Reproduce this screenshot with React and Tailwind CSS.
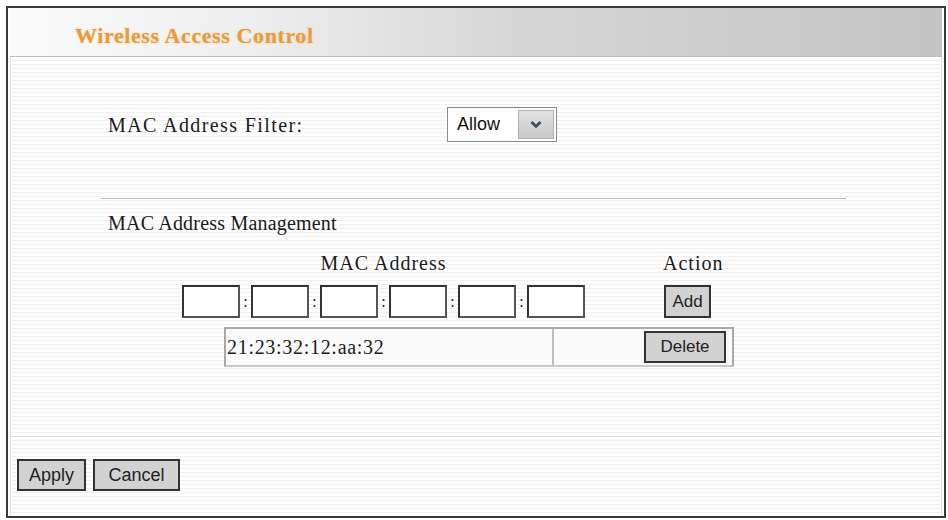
export default function App() {
  const serif = { fontFamily: '"Liberation Serif", "DejaVu Serif", serif' };
  const sans = { fontFamily: '"Liberation Sans", Arial, sans-serif' };
  const boxes = [0, 1, 2, 3, 4, 5];

  return (
    <div className="w-[948px] h-[520px] bg-white pt-[6px] pl-[6px] pr-[2px] pb-[2px]">
      <div className="h-[512px] w-[940px] border-2 border-[#3a3a3a] flex flex-col bg-white">
        {/* Header band */}
        <div className="h-[49px] mx-[2px] flex items-center pl-[65px] pt-[6px] bg-[linear-gradient(to_right,#fbfbfb_0%,#efefef_25%,#d6d6d6_55%,#c4c4c4_100%)] border-b border-[#bdbdbd]">
          <span
            className="text-[22px] font-bold tracking-[0.6px] text-[#e99a3a] [text-shadow:0_0_2px_#f6c78a]"
            style={serif}
          >
            Wireless Access Control
          </span>
        </div>

        {/* Body */}
        <div className="flex-1 mx-[2px] border-x border-[#e2e2e2] flex flex-col bg-[repeating-linear-gradient(to_bottom,#ffffff_0px,#ffffff_3px,#f1f1f1_3px,#f1f1f1_4px)] text-[#1a1a1a]">
          {/* Filter row */}
          <div className="mt-[50px] h-[35px] flex items-center">
            <div className="w-[436px] pl-[97px] text-[20px] tracking-[1.4px]" style={serif}>
              MAC Address Filter:
            </div>
            <div className="w-[110px] h-[35px] border border-[#7f8c99] bg-white flex items-center justify-between pl-[9px] pr-[2px]">
              <span className="text-[18px] text-[#111]" style={sans}>Allow</span>
              <div className="w-[36px] h-[29px] bg-[linear-gradient(to_bottom,#e4e4e4,#c8c8c8)] border border-[#b0b0b0] flex items-center justify-center">
                <svg width="12" height="9" viewBox="0 0 12 9">
                  <path d="M1.5 2 L6 6.5 L10.5 2" fill="none" stroke="#3d4b5c" strokeWidth="2.6" />
                </svg>
              </div>
            </div>
          </div>

          {/* Separator */}
          <div className="mt-[56px] ml-[90px] w-[745px] h-px bg-[#b9b9b9]" />

          <div className="mt-[14px] pl-[97px] h-[20px] leading-[20px] text-[20px] tracking-[0.2px]" style={serif}>
            MAC Address Management
          </div>

          {/* Column headings */}
          <div className="mt-[20px] ml-[171px] h-[20px] flex items-center text-[20px] tracking-[1px]" style={serif}>
            <div className="w-[403px] text-center">MAC Address</div>
            <div className="ml-[78px]">Action</div>
          </div>

          {/* Inputs row */}
          <div className="mt-[12px] ml-[171px] h-[33px] flex items-center">
            {boxes.map((i) => (
              <div key={i} className="flex items-center">
                {i > 0 && (
                  <span className="w-[11px] text-center text-[16px] leading-none" style={serif}>:</span>
                )}
                <div className="w-[58px] h-[33px] bg-white border-2 border-[#333] border-r-[#555] border-b-[#555]" />
              </div>
            ))}
            <button
              className="ml-[79px] w-[47px] h-[33px] bg-[#d2d2d2] border-2 border-[#333] text-[17px] text-[#222]"
              style={sans}
            >
              Add
            </button>
          </div>

          {/* Entry table */}
          <div className="mt-[9px] ml-[213px] w-[510px] h-[40px] border-2 border-[#a8a8a8] border-b-[#c8c8c8] flex bg-[#fafafa]">
            <div className="w-[328px] border-r-2 border-[#bdbdbd] flex items-center pl-[1px] text-[20px] tracking-[0.7px]" style={serif}>
              21:23:32:12:aa:32
            </div>
            <div className="flex-1 flex items-center justify-end pr-[6px]">
              <button
                className="w-[82px] h-[32px] bg-[#d2d2d2] border-2 border-[#333] text-[17px] text-[#222]"
                style={sans}
              >
                Delete
              </button>
            </div>
          </div>

          {/* Bottom separator */}
          <div className="mt-[69px] h-px bg-[#d6d6d6]" />

          {/* Apply / Cancel */}
          <div className="mt-[22px] ml-[6px] flex gap-[7px]">
            <button
              className="w-[69px] h-[32px] bg-[#d2d2d2] border-2 border-[#333] text-[18px] text-[#222]"
              style={sans}
            >
              Apply
            </button>
            <button
              className="w-[87px] h-[32px] bg-[#d2d2d2] border-2 border-[#333] text-[18px] text-[#222]"
              style={sans}
            >
              Cancel
            </button>
          </div>
        </div>
      </div>
    </div>
  );
}
